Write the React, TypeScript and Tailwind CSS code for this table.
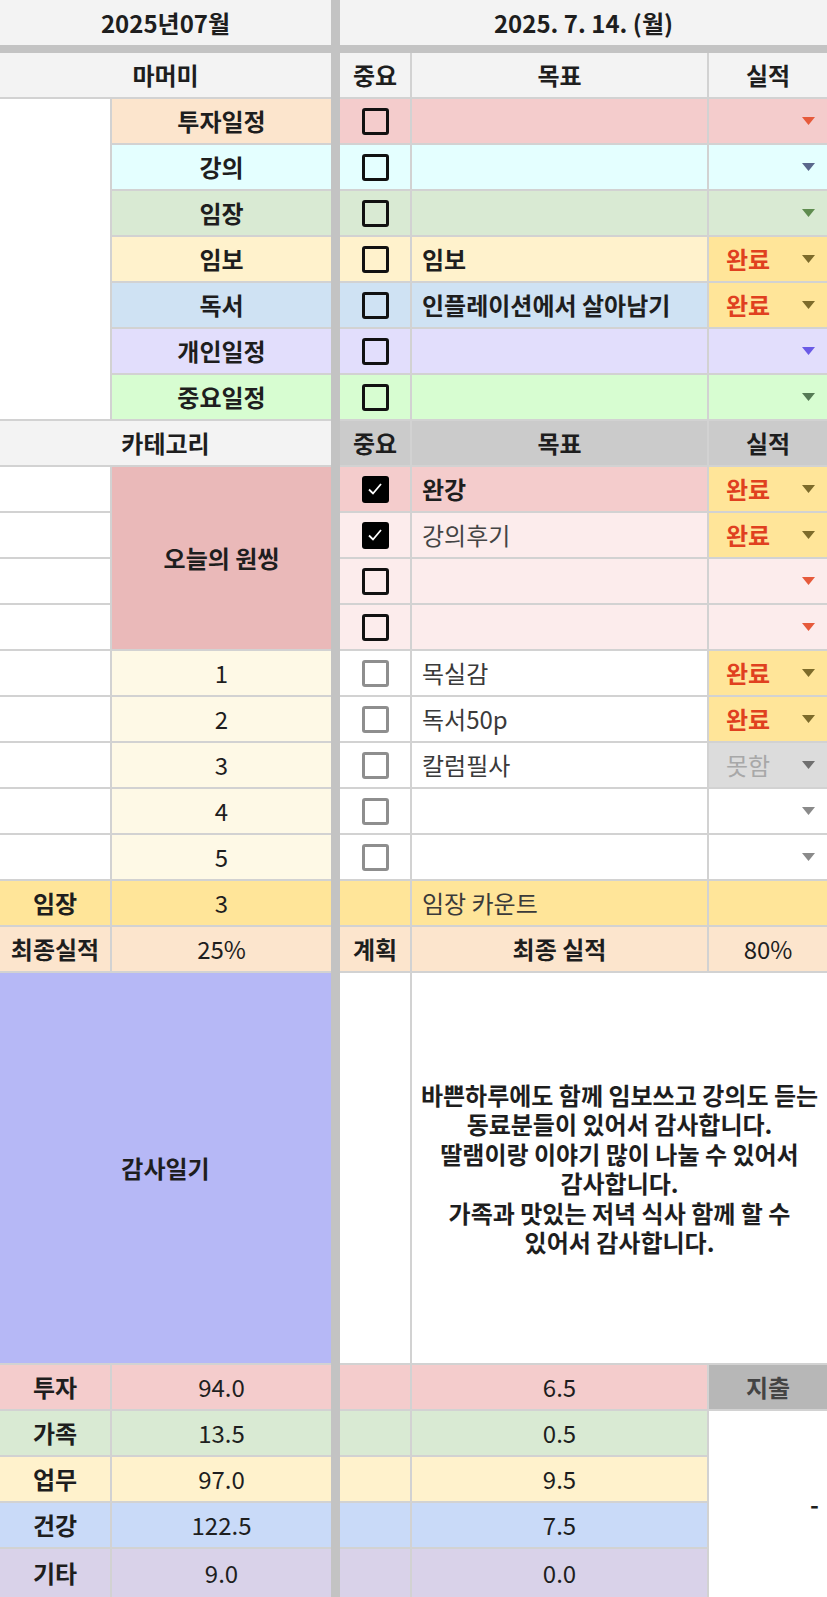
import React from "react";

type Variant = "black" | "gray";

function Tri({ color }: { color: string }) {
  return (
    <svg width="13" height="8" viewBox="0 0 13 8" className="shrink-0">
      <path d="M0 0 H13 L6.5 8 Z" fill={color} />
    </svg>
  );
}

function Box({ checked, variant }: { checked?: boolean; variant: Variant }) {
  if (checked) {
    return (
      <div className="w-[27px] h-[27px] rounded-[3px] bg-black flex items-center justify-center">
        <svg width="20" height="20" viewBox="0 0 20 20">
          <path d="M4 10.5 L8 14.5 L16 5" stroke="white" strokeWidth="1.8" fill="none" />
        </svg>
      </div>
    );
  }
  if (variant === "black") {
    return <div className="w-[27px] h-[27px] rounded-[3px] border-[3px] border-[#111]" />;
  }
  return <div className="w-[27px] h-[27px] rounded-[3px] border-[3px] border-[#8e8e8e]" />;
}

function Status({ done, miss, tri }: { done?: boolean; miss?: boolean; tri: string }) {
  return (
    <div className="w-full h-full flex items-center justify-between pl-[17px] pr-[12px]">
      <span
        className={
          done
            ? "text-[#e0401f] font-bold"
            : miss
            ? "text-[#a8a8a8]"
            : ""
        }
      >
        {done ? "완료" : miss ? "못함" : ""}
      </span>
      <Tri color={tri} />
    </div>
  );
}

const top = [
  { name: "투자일정", b: "bg-[#fce5cd]", r: "bg-[#f4cccc]", tri: "#e65a3b", goal: "", done: false },
  { name: "강의", b: "bg-[#e4ffff]", r: "bg-[#e4ffff]", tri: "#5a678c", goal: "", done: false },
  { name: "임장", b: "bg-[#d9ead3]", r: "bg-[#d9ead3]", tri: "#5f8c4f", goal: "", done: false },
  { name: "임보", b: "bg-[#fff2cc]", r: "bg-[#fff2cc]", tri: "#7d6b2a", goal: "임보", done: true },
  { name: "독서", b: "bg-[#cfe2f3]", r: "bg-[#cfe2f3]", tri: "#7d6b2a", goal: "인플레이션에서 살아남기", done: true },
  { name: "개인일정", b: "bg-[#e2defc]", r: "bg-[#e2defc]", tri: "#6a5ae6", goal: "", done: false },
  { name: "중요일정", b: "bg-[#d7fdd1]", r: "bg-[#d7fdd1]", tri: "#557a55", goal: "", done: false },
];

const oneThing = [
  { goal: "완강", bold: true, bg: "bg-[#f4cccc]", done: true },
  { goal: "강의후기", bold: false, bg: "bg-[#fcecec]", done: true },
  { goal: "", bold: false, bg: "bg-[#fcecec]", done: false },
  { goal: "", bold: false, bg: "bg-[#fcecec]", done: false },
];

const numbered = [
  { n: "1", goal: "목실감", st: "done" },
  { n: "2", goal: "독서50p", st: "done" },
  { n: "3", goal: "칼럼필사", st: "miss" },
  { n: "4", goal: "", st: "" },
  { n: "5", goal: "", st: "" },
];

const bottom = [
  { k: "투자", v: "94.0", r: "6.5", bg: "bg-[#f4cccc]" },
  { k: "가족", v: "13.5", r: "0.5", bg: "bg-[#d9ead3]" },
  { k: "업무", v: "97.0", r: "9.5", bg: "bg-[#fff2cc]" },
  { k: "건강", v: "122.5", r: "7.5", bg: "bg-[#c9daf8]" },
  { k: "기타", v: "9.0", r: "0.0", bg: "bg-[#d9d2e9]" },
];

const gamsa = [
  "바쁜하루에도 함께 임보쓰고 강의도 듣는",
  "동료분들이 있어서 감사합니다.",
  "딸램이랑 이야기 많이 나눌 수 있어서",
  "감사합니다.",
  "가족과 맛있는 저녁 식사 함께 할 수",
  "있어서 감사합니다.",
];

const C = "flex items-center justify-center";

export default function App() {
  return (
    <div className="w-[827px] h-[1597px] overflow-hidden bg-white text-[24px] leading-none text-[#1e1e1e] font-['Noto_Sans_CJK_KR','Noto_Sans',sans-serif]">
      {/* title row */}
      <div className="flex h-[45px]">
        <div className={`w-[331px] bg-[#f3f3f3] font-bold ${C}`}>2025년07월</div>
        <div className="w-[9px] bg-[#c3c3c3]" />
        <div className={`flex-1 bg-[#f3f3f3] font-bold ${C}`}>2025. 7. 14. (월)</div>
      </div>
      <div className="h-[8px] bg-[#c3c3c3]" />

      <div className="flex">
        {/* LEFT GRID */}
        <div className="w-[331px] grid grid-cols-[110px_219px] gap-[2px] bg-[#d2d2d2] grid-rows-[repeat(20,44px)_390px_repeat(4,44px)_48px]">
          <div className={`col-span-2 bg-[#f3f3f3] font-bold ${C}`}>마머미</div>
          <div className="row-span-7 bg-white" />
          {top.map((t) => (
            <div key={t.name} className={`${t.b} font-bold ${C}`}>
              {t.name}
            </div>
          ))}
          <div className={`col-span-2 bg-[#f3f3f3] font-bold ${C}`}>카테고리</div>
          <div className="bg-white" />
          <div className={`row-span-4 bg-[#eab9b9] font-bold ${C}`}>오늘의 원씽</div>
          <div className="bg-white" />
          <div className="bg-white" />
          <div className="bg-white" />
          {numbered.map((r) => (
            <React.Fragment key={r.n}>
              <div className="bg-white" />
              <div className={`bg-[#fef9e6] ${C}`}>{r.n}</div>
            </React.Fragment>
          ))}
          <div className={`bg-[#ffe599] font-bold ${C}`}>임장</div>
          <div className={`bg-[#ffe599] ${C}`}>3</div>
          <div className={`bg-[#fce5cd] font-bold ${C}`}>최종실적</div>
          <div className={`bg-[#fce5cd] ${C}`}>25%</div>
          <div className={`col-span-2 bg-[#b6b8f6] font-bold ${C}`}>감사일기</div>
          {bottom.map((r) => (
            <React.Fragment key={r.k}>
              <div className={`${r.bg} font-bold ${C}`}>{r.k}</div>
              <div className={`${r.bg} ${C}`}>{r.v}</div>
            </React.Fragment>
          ))}
        </div>

        <div className="w-[9px] bg-[#c3c3c3]" />

        {/* RIGHT GRID */}
        <div className="w-[487px] grid grid-cols-[70px_295px_118px] gap-[2px] bg-[#d2d2d2] grid-rows-[repeat(20,44px)_390px_repeat(4,44px)_48px]">
          <div className={`bg-[#f3f3f3] font-bold ${C}`}>중요</div>
          <div className={`bg-[#f3f3f3] font-bold ${C}`}>목표</div>
          <div className={`bg-[#f3f3f3] font-bold ${C}`}>실적</div>

          {top.map((t) => (
            <React.Fragment key={t.name}>
              <div className={`${t.r} ${C}`}>
                <Box variant="black" />
              </div>
              <div className={`${t.r} flex items-center pl-[10px] font-bold whitespace-nowrap`}>{t.goal}</div>
              <div className={t.done ? "bg-[#ffe599]" : t.r}>
                <Status done={t.done} tri={t.tri} />
              </div>
            </React.Fragment>
          ))}

          <div className={`bg-[#cbcbcb] font-bold ${C}`}>중요</div>
          <div className={`bg-[#cbcbcb] font-bold ${C}`}>목표</div>
          <div className={`bg-[#cbcbcb] font-bold ${C}`}>실적</div>

          {oneThing.map((o, i) => (
            <React.Fragment key={i}>
              <div className={`${o.bg} ${C}`}>
                <Box variant="black" checked={o.done} />
              </div>
              <div
                className={`${o.bg} flex items-center pl-[10px] ${o.bold ? "font-bold" : "text-[#444]"}`}
              >
                {o.goal}
              </div>
              <div className={o.done ? "bg-[#ffe599]" : o.bg}>
                <Status done={o.done} tri={o.done ? "#7d6b2a" : "#e65a3b"} />
              </div>
            </React.Fragment>
          ))}

          {numbered.map((r) => (
            <React.Fragment key={r.n}>
              <div className={`bg-white ${C}`}>
                <Box variant="gray" />
              </div>
              <div className="bg-white flex items-center pl-[10px] text-[#3a3a3a]">{r.goal}</div>
              <div
                className={
                  r.st === "done" ? "bg-[#ffe599]" : r.st === "miss" ? "bg-[#dcdcdc]" : "bg-white"
                }
              >
                <Status
                  done={r.st === "done"}
                  miss={r.st === "miss"}
                  tri={r.st === "done" ? "#7d6b2a" : r.st === "miss" ? "#6f6f6f" : "#8a8a8a"}
                />
              </div>
            </React.Fragment>
          ))}

          <div className="bg-[#ffe599]" />
          <div className="bg-[#ffe599] flex items-center pl-[10px] text-[#3a3a3a]">임장 카운트</div>
          <div className="bg-[#ffe599]" />

          <div className={`bg-[#fce5cd] font-bold ${C}`}>계획</div>
          <div className={`bg-[#fce5cd] font-bold ${C}`}>최종 실적</div>
          <div className={`bg-[#fce5cd] ${C}`}>80%</div>

          <div className="bg-white" />
          <div className="col-span-2 bg-white font-bold flex flex-col items-center justify-center">
            {gamsa.map((line) => (
              <div key={line} className="h-[29.5px] leading-[29.5px] whitespace-nowrap text-center">
                {line}
              </div>
            ))}
          </div>

          {bottom.map((r, i) => (
            <React.Fragment key={r.k}>
              <div className={r.bg} />
              <div className={`${r.bg} ${C}`}>{r.r}</div>
              {i === 0 && <div className={`bg-[#b7b7b7] text-[#444] font-bold ${C}`}>지출</div>}
              {i === 1 && (
                <div className="row-span-4 bg-white flex items-center justify-end pr-[8px] font-bold">
                  -
                </div>
              )}
            </React.Fragment>
          ))}
        </div>
      </div>
    </div>
  );
}
